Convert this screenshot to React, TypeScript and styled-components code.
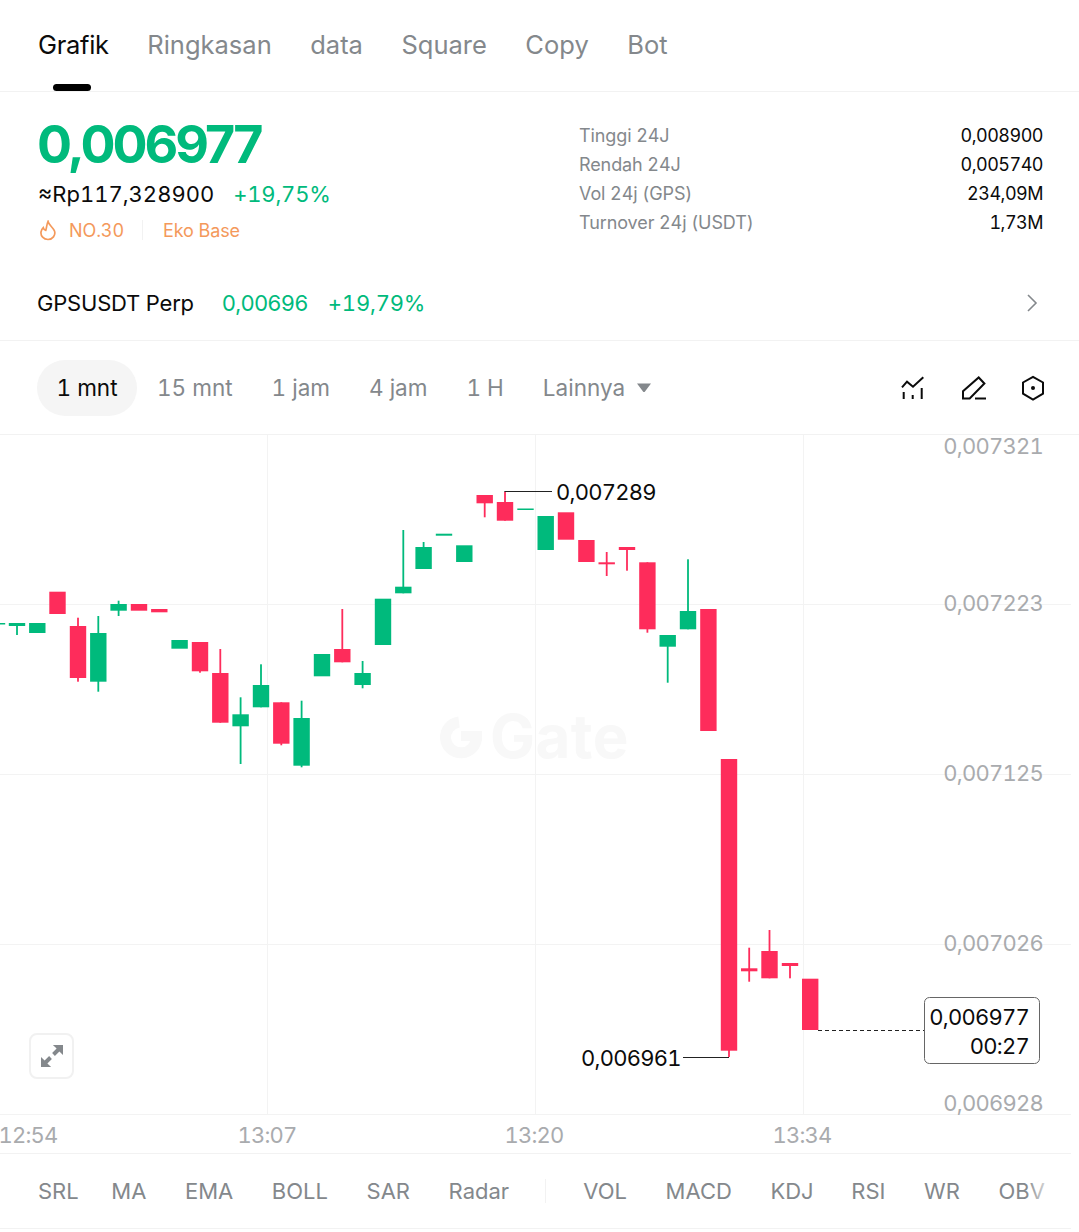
import React from 'react';
import styled, { createGlobalStyle } from 'styled-components';

const UP = '#00ba7c';
const DOWN = '#fe2c5b';
const INK = '#0b0b0b';
const MUTED = '#84888c';
const LINE = '#f2f2f2';
const ORANGE = '#f4995b';

const Global = createGlobalStyle`
  html, body { margin: 0; padding: 0; background: #fff; overflow: hidden; }
  body {
    font-family: Inter, "Liberation Sans", sans-serif;
    color: ${INK};
    font-feature-settings: "tnum" 1;
  }
  * { box-sizing: border-box; }
`;

const Page = styled.div`
  width: 1079px;
  height: 1232px;
  overflow: hidden;
`;

const TabBar = styled.nav`
  height: 92px;
  padding: 29px 0 0 38px;
  display: flex;
  gap: 38.5px;
  border-bottom: 1px solid ${LINE};
`;

const Tab = styled.div<{ $active?: boolean }>`
  position: relative;
  height: 62px;
  font-size: 25.5px;
  line-height: 32px;
  font-weight: 400;
  letter-spacing: ${(p) => (p.$active ? '-0.3px' : '0')};
  color: ${(p) => (p.$active ? INK : MUTED)};
  ${(p) =>
    p.$active &&
    `&::after {
      content: '';
      position: absolute;
      left: 15px;
      bottom: 0;
      width: 38px;
      height: 7px;
      border-radius: 4px;
      background: #000;
    }`}
`;

const Summary = styled.section`
  height: 178px;
  padding: 0 36px 0 38px;
  display: flex;
  justify-content: space-between;
`;

const PriceColumn = styled.div`
  display: flex;
  flex-direction: column;
`;

const BigPrice = styled.div`
  margin: 22px 0 0 -1px;
  height: 62px;
  font-size: 52px;
  line-height: 62px;
  font-weight: 700;
  letter-spacing: -3px;
  font-feature-settings: "tnum" 0;
  color: ${UP};
`;

const FiatRow = styled.div`
  margin-top: 4px;
  display: flex;
  align-items: center;
  gap: 19px;
  font-size: 22px;
  line-height: 28px;
`;

const Change = styled.span`
  color: ${UP};
  letter-spacing: -0.2px;
`;

const TagRow = styled.div`
  margin-top: 9px;
  display: flex;
  align-items: center;
  height: 26px;
  font-size: 18px;
  letter-spacing: -0.1px;
  color: ${ORANGE};
`;

const FlameIcon = styled.svg`
  width: 18px;
  height: 21px;
  margin-right: 12px;
  margin-left: 1px;
`;

const TagDivider = styled.span`
  width: 1px;
  height: 20px;
  margin: 0 20px 0 18px;
  background: ${LINE};
`;

const Stats = styled.dl`
  margin: 29px 0 0;
  width: 464px;
  display: grid;
  grid-template-columns: 1fr auto;
  grid-auto-rows: 29px;
  align-items: center;
  font-size: 18px;
`;

const StatLabel = styled.dt`
  color: ${MUTED};
  letter-spacing: -0.1px;
`;

const StatValue = styled.dd`
  margin: 0;
  text-align: right;
  font-size: 18px;
  letter-spacing: -0.5px;
`;

const PerpRow = styled.div`
  height: 71px;
  padding: 0 41px 4px 37px;
  display: flex;
  align-items: center;
  font-size: 22px;
  border-bottom: 1px solid ${LINE};
`;

const PerpName = styled.span`
  margin-right: 28px;
  letter-spacing: -0.2px;
`;

const PerpPrice = styled.span`
  margin-right: 20px;
  letter-spacing: -0.8px;
  color: ${UP};
`;

const Chevron = styled.svg`
  margin-left: auto;
  width: 12px;
  height: 20px;
`;

const TimeBar = styled.div`
  height: 94px;
  padding: 0 33px 0 37px;
  display: flex;
  align-items: center;
  border-bottom: 1px solid ${LINE};
  font-size: 22.5px;
`;

const Intervals = styled.div`
  display: flex;
  align-items: center;
`;

const Interval = styled.div<{ $active?: boolean }>`
  height: 56px;
  line-height: 56px;
  color: ${(p) => (p.$active ? INK : MUTED)};
  ${(p) =>
    p.$active
      ? `padding: 0 19.500px; margin-right: 20px; border-radius: 28px; background: #f5f5f5;`
      : `margin-right: 39px;`}
`;

const Caret = styled.svg`
  width: 14px;
  height: 9px;
  margin-left: -27px;
`;

const ToolIcons = styled.div`
  margin-left: auto;
  display: flex;
  align-items: center;
  gap: 34px;
`;

const ToolIcon = styled.svg`
  width: 26px;
  height: 26px;
  display: block;
  fill: none;
  stroke: #0b0b0b;
  stroke-width: 2;
`;

const ChartArea = styled.div`
  position: relative;
  height: 718px;
`;

const ChartSvg = styled.svg`
  display: block;
  width: 1079px;
  height: 718px;
  overflow: visible;
`;

const AxisText = styled.text`
  font-size: 22px;
  letter-spacing: -0.75px;
  fill: #a9abae;
`;

const MarkText = styled.text`
  font-size: 22px;
  letter-spacing: -0.75px;
  fill: ${INK};
`;

const Watermark = styled.text`
  font-size: 60px;
  font-weight: 700;
  font-feature-settings: "tnum" 0;
  letter-spacing: 0.5px;
  fill: #f8f8f8;
`;

const ExpandButton = styled.button`
  position: absolute;
  left: 29px;
  bottom: 74px;
  width: 45px;
  height: 46px;
  padding: 0;
  display: flex;
  align-items: center;
  justify-content: center;
  background: #fff;
  border: 2px solid #f1f1f1;
  border-radius: 8px;
`;

const Indicators = styled.div`
  position: relative;
  width: 1071px;
  height: 76px;
  padding-left: 38px;
  display: flex;
  align-items: center;
  gap: 38.6px;
  border-top: 1px solid ${LINE};
  border-bottom: 1px solid ${LINE};
  font-size: 22px;
  color: ${MUTED};
  white-space: nowrap;
  overflow: hidden;
  &::after {
    content: '';
    position: absolute;
    top: 0;
    right: 15px;
    width: 30px;
    height: 100%;
    background: linear-gradient(to right, rgba(255, 255, 255, 0), #fff);
  }
`;

const IndicatorName = styled.span<{ $trim?: number }>`
  margin-right: ${(p) => -(p.$trim ?? 0)}px;
`;

const IndicatorDivider = styled.span`
  width: 1px;
  height: 24px;
  margin-right: -1px;
  background: ${LINE};
`;

type Candle = [number, number, number, number?, number?, boolean?];
const candles: Candle[] = [
  [-3, 623, 624.5],
  [17, 623, 626, 623, 635],
  [37.3, 623, 633],
  [57.5, 591.7, 614, undefined, undefined, true],
  [78, 626, 678, 617.7, 681.7, true],
  [98.3, 633, 681.7, 616, 691.7],
  [118.6, 604, 610.7, 600.7, 616],
  [139, 604, 610.7, undefined, undefined, true],
  [159.3, 609, 612.3, undefined, undefined, true],
  [179.6, 640, 648.7],
  [200, 642, 671.3, 642, 672.7, true],
  [220.3, 673, 722.7, 649, 722.7, true],
  [240.6, 714.3, 726.3, 697.3, 764],
  [261, 685, 707.3, 664.3, 707.3],
  [281.3, 702.3, 743.7, 702.3, 745.3, true],
  [301.6, 718, 765.7, 700.7, 767.3],
  [322, 654, 676.3],
  [342.3, 649, 662.3, 609, 662.3, true],
  [362.6, 673, 685, 661, 688.3],
  [383, 598.7, 645],
  [403.3, 586.7, 593.3, 530, 593.3],
  [423.6, 547, 569, 542, 569],
  [444, 533.7, 535.7],
  [464.3, 545.3, 562],
  [484.7, 495, 503.3, 495, 517.3, true],
  [505, 502, 520.7, 491.7, 520.7, true],
  [525.5, 508.5, 510],
  [545.7, 516, 550],
  [566, 512.3, 539.7, undefined, undefined, true],
  [586.4, 540, 562, undefined, undefined, true],
  [606.7, 562.3, 564.3, 552, 576, true],
  [627, 547, 550, 547, 570.7, true],
  [647.4, 562.3, 629.3, 562.3, 632.7, true],
  [667.7, 635, 646.7, 635, 682.7],
  [688, 611, 629.3, 559.3, 629.3],
  [708.4, 609, 731, undefined, undefined, true],
  [729, 759, 1050.7, 759, 1057, true],
  [749.2, 968.3, 971.3, 947.7, 981.7, true],
  [769.5, 951, 978.3, 930, 978.3, true],
  [790, 963, 966, 963, 978.3, true],
  [810.2, 978.7, 1030, undefined, undefined, true],
];

const priceLabels: [string, number][] = [
  ['0,007321', 454],
  ['0,007223', 611],
  ['0,007125', 781],
  ['0,007026', 951],
  ['0,006928', 1111],
];

const timeLabels: [string, number][] = [
  ['12:54', 28],
  ['13:07', 267],
  ['13:20', 534],
  ['13:34', 802],
];

const Chart = () => (
  <ChartSvg viewBox="0 435 1079 718">
    <g stroke="#f3f3f3" strokeWidth="1">
      {[604.5, 774.5, 944.5, 1114.5].map((y) => (
        <line key={y} x1="0" x2="1071" y1={y} y2={y} />
      ))}
      {[267.5, 535.5, 803.5].map((x) => (
        <line key={x} x1={x} x2={x} y1="435" y2="1114" />
      ))}
    </g>
    <g>
      <path
        d="M459 722a15.500 15.500 0 1 0 17.500 15"
        fill="none"
        stroke="#f8f8f8"
        strokeWidth="11"
      />
      <rect x="461" y="731" width="21" height="10" fill="#f8f8f8" />
      <Watermark x="490" y="758">Gate</Watermark>
    </g>
    {candles.map(([x, top, bottom, wickTop, wickBottom, down]) => {
      const colour = down ? DOWN : UP;
      return (
        <g key={x} fill={colour} stroke="none">
          {wickTop !== undefined && wickBottom !== undefined && (
            <rect x={x - 0.9} y={wickTop} width="1.8" height={wickBottom - wickTop} />
          )}
          <rect x={x - 8.2} y={top} width="16.4" height={bottom - top} />
        </g>
      );
    })}
    <path d="M505 492V491.5H552" fill="none" stroke="#222" strokeWidth="1.2" />
    <MarkText x="556" y="500">0,007289</MarkText>
    <path d="M683 1057.5H729" fill="none" stroke="#222" strokeWidth="1.2" />
    <MarkText x="581" y="1066">0,006961</MarkText>
    <line x1="818" x2="924" y1="1030.5" y2="1030.5" stroke="#222" strokeWidth="1" strokeDasharray="4 3" />
    {priceLabels.map(([label, y]) => (
      <AxisText key={label} x="1043" y={y} textAnchor="end">{label}</AxisText>
    ))}
    {timeLabels.map(([label, x]) => (
      <AxisText key={label} x={x} y="1143" textAnchor="middle">{label}</AxisText>
    ))}
    <rect x="924.5" y="997.5" width="115" height="66" rx="5" fill="#fff" stroke="#666" strokeWidth="1" />
    <MarkText x="1029" y="1025" textAnchor="end">0,006977</MarkText>
    <MarkText x="1029" y="1054" textAnchor="end">00:27</MarkText>
  </ChartSvg>
);

export default function App() {
  return (
    <Page>
      <Global />
      <TabBar>
        <Tab $active>Grafik</Tab>
        <Tab>Ringkasan</Tab>
        <Tab>data</Tab>
        <Tab>Square</Tab>
        <Tab>Copy</Tab>
        <Tab>Bot</Tab>
      </TabBar>

      <Summary>
        <PriceColumn>
          <BigPrice>0,006977</BigPrice>
          <FiatRow>
            <span>≈Rp117,328900</span>
            <Change>+19,75%</Change>
          </FiatRow>
          <TagRow>
            <FlameIcon viewBox="0 0 18 21" fill="none" stroke={ORANGE} strokeWidth="1.7">
              <path d="M9 1.500c.8 3.600 5 5.800 6.500 9.500 1.400 4.300-2 8.500-6.500 8.500S1.500 15.800 2 12c.3-1.800 1.200-3.200 2.300-4.300.4 1.400 1.300 2.400 2.500 2.600C7.700 7.500 7.700 4.300 9 1.500z" />
            </FlameIcon>
            <span>NO.30</span>
            <TagDivider />
            <span>Eko Base</span>
          </TagRow>
        </PriceColumn>
        <Stats>
          <StatLabel>Tinggi 24J</StatLabel>
          <StatValue>0,008900</StatValue>
          <StatLabel>Rendah 24J</StatLabel>
          <StatValue>0,005740</StatValue>
          <StatLabel>Vol 24j (GPS)</StatLabel>
          <StatValue>234,09M</StatValue>
          <StatLabel>Turnover 24j (USDT)</StatLabel>
          <StatValue>1,73M</StatValue>
        </Stats>
      </Summary>

      <PerpRow>
        <PerpName>GPSUSDT Perp</PerpName>
        <PerpPrice>0,00696</PerpPrice>
        <Change>+19,79%</Change>
        <Chevron viewBox="0 0 12 20" fill="none" stroke="#84888c" strokeWidth="1.6">
          <path d="M2 2l8 8-8 8" />
        </Chevron>
      </PerpRow>

      <TimeBar>
        <Intervals>
          <Interval $active>1 mnt</Interval>
          <Interval>15 mnt</Interval>
          <Interval>1 jam</Interval>
          <Interval>4 jam</Interval>
          <Interval>1 H</Interval>
          <Interval>Lainnya</Interval>
          <Caret viewBox="0 0 14 9" fill="#84888c">
            <path d="M0 0.500h14L8 8.500a1.200 1.200 0 0 1-2 0z" />
          </Caret>
        </Intervals>
        <ToolIcons>
          <ToolIcon viewBox="0 0 26 26">
            <path d="M2 12.300l5-5.600 6 5L23.300 2.300" />
            <path d="M3.700 17v7M12.700 20v4M21.700 13v11" />
          </ToolIcon>
          <ToolIcon viewBox="0 0 26 26">
            <path d="M3 23.500v-7.300L18.700 2.500l5.700 6L9.700 23.500z" />
            <path d="M15 23.500h11" />
          </ToolIcon>
          <ToolIcon viewBox="0 0 26 26">
            <path d="M13 1.800l10 5.700v11.200l-10 5.800-10-5.800V7.500z" />
            <circle cx="13" cy="13" r="2" fill="#0b0b0b" stroke="none" />
          </ToolIcon>
        </ToolIcons>
      </TimeBar>

      <ChartArea>
        <Chart />
        <ExpandButton aria-label="Perbesar">
          <svg width="24" height="24" viewBox="0 0 24 24" fill="#84888c" stroke="none">
            <path d="M23 1v10l-3.600-3.600-4.500 4.500-2.800-2.800 4.500-4.500L12.900 1zM1 23V13l3.600 3.600 4.500-4.500 2.800 2.800-4.500 4.500 3.700 3.600z" />
          </svg>
        </ExpandButton>
      </ChartArea>

      <Indicators>
        <IndicatorName $trim={6}>SRL</IndicatorName>
        <IndicatorName>MA</IndicatorName>
        <IndicatorName>EMA</IndicatorName>
        <IndicatorName>BOLL</IndicatorName>
        <IndicatorName>SAR</IndicatorName>
        <IndicatorName $trim={3}>Radar</IndicatorName>
        <IndicatorDivider />
        <IndicatorName>VOL</IndicatorName>
        <IndicatorName>MACD</IndicatorName>
        <IndicatorName $trim={1}>KDJ</IndicatorName>
        <IndicatorName>RSI</IndicatorName>
        <IndicatorName>WR</IndicatorName>
        <IndicatorName>OBV</IndicatorName>
      </Indicators>
    </Page>
  );
}
